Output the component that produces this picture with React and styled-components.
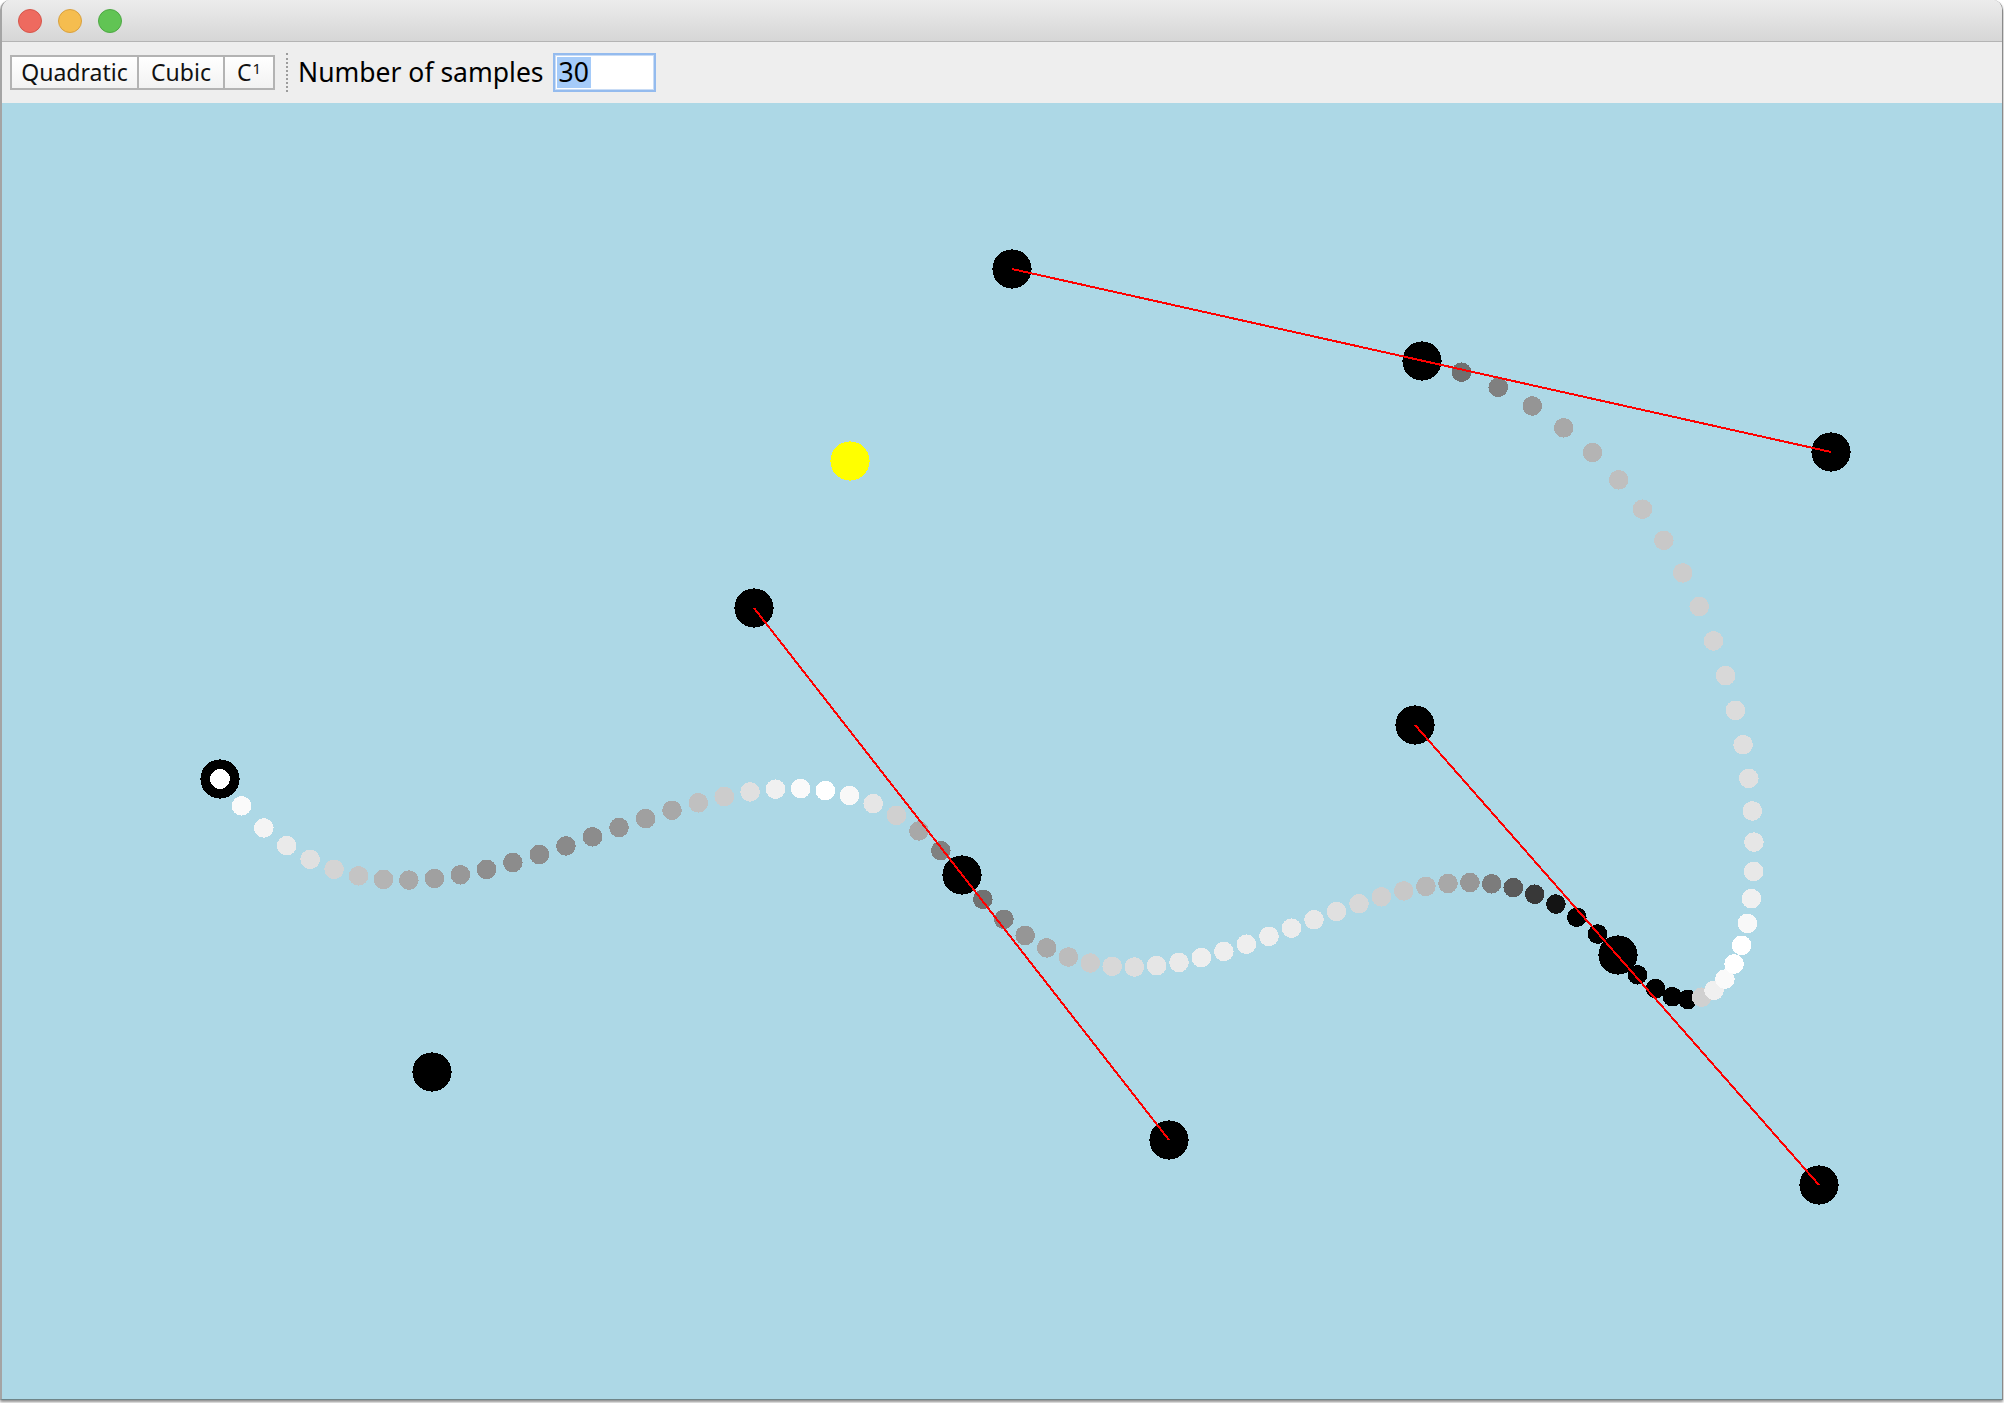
import React from 'react';
import styled, { createGlobalStyle } from 'styled-components';

const GlobalStyle = createGlobalStyle`
  html, body { margin: 0; padding: 0; background: #ffffff; }
  body { font-family: "Noto Sans", "DejaVu Sans", sans-serif; }
  * { box-sizing: border-box; }
`;

const Screen = styled.div`
  width: 2004px;
  height: 1403px;
  overflow: hidden;
  background: #ffffff;
`;

const Window = styled.div`
  width: 2003px;
  height: 1400px;
  display: flex;
  flex-direction: column;
  border-left: 2px solid #a4a4a4;
  border-right: 1px solid #8a8a8a;
  border-bottom: 1px solid #6f8589;
  border-radius: 10px 10px 0 0;
  overflow: hidden;
  box-shadow: 0 2px 3px rgba(0, 0, 0, 0.45);
`;

const TitleBar = styled.div`
  height: 42px;
  flex: none;
  display: flex;
  align-items: center;
  gap: 16px;
  padding-left: 16px;
  background: linear-gradient(#ececec, #d6d6d6);
  border-bottom: 1px solid #b4b4b4;
`;

const Light = styled.span`
  width: 24px;
  height: 24px;
  border-radius: 50%;
  background: ${(p) => p.$fill};
  border: 1px solid ${(p) => p.$edge};
`;

const Toolbar = styled.div`
  height: 61px;
  flex: none;
  display: flex;
  align-items: center;
  padding-left: 8px;
  background: #eeeeee;
`;

const ButtonGroup = styled.div`
  display: flex;
  height: 35px;
`;

const ToolButton = styled.button`
  width: ${(p) => p.$w}px;
  height: 35px;
  margin: 0;
  padding: 0;
  border: 2px solid #b3b3b3;
  border-left-width: ${(p) => (p.$first ? 2 : 0)}px;
  background: linear-gradient(#ffffff, #f2f2f2);
  font-family: "Noto Sans", "DejaVu Sans", sans-serif;
  font-size: 23px;
  color: #111111;
  display: flex;
  align-items: center;
  justify-content: center;
  line-height: 1;
`;

const Sup = styled.span`
  font-size: 15px;
  align-self: flex-start;
  margin-top: 4px;
  margin-left: 1px;
`;

const Separator = styled.div`
  width: 0;
  height: 39px;
  margin: 0 10px 0 11px;
  border-left: 2px dotted #9c9c9c;
`;

const Label = styled.span`
  font-size: 26.5px;
  color: #000000;
  line-height: 1;
  margin-right: 9px;
`;

const SampleField = styled.div`
  width: 103px;
  height: 39px;
  background: #ffffff;
  border: 2px solid #94bbee;
  box-shadow: inset 0 0 0 1px #c9dcf5;
  display: flex;
  align-items: center;
  padding-left: 2px;
`;

const Selection = styled.span`
  background: #a5cbf9;
  font-size: 26.5px;
  line-height: 31px;
  height: 31px;
  padding: 0 2px;
  color: #000000;
`;

const Canvas = styled.div`
  flex: 1;
  background: #add8e6;
  display: flex;
`;

const Drawing = styled.svg`
  width: 100%;
  height: 100%;
  display: block;
`;

const P = {
  S: [220, 779],
  D: [432, 1072],
  B1: [754, 608],
  B2: [962, 875],
  B3: [1169, 1140],
  C1: [1415, 725],
  C2: [1618, 955],
  C3: [1819, 1185],
  A1: [1012, 269],
  A2: [1422, 361],
  A3: [1831, 452],
  Y: [850, 461],
};

const segments = [
  {
    pts: [P.S, P.D, P.B1, P.B2],
    grays: ['fa', 'f4', 'ea', 'e0', 'd4', 'c4', 'b4', 'a8', 'a0', '98', '8e', '8c', '8c', '8a', '8c', '94', 'a0', 'a8', 'c0', 'cc', 'e0', 'f0', 'fa', 'ff', 'f8', 'e6', 'd0', 'a8', '80'],
  },
  {
    pts: [P.B2, P.B3, P.C1, P.C2],
    grays: ['71', '80', '96', 'a8', 'bc', 'cc', 'd8', 'de', 'e6', 'ea', 'ee', 'ee', 'ee', 'ee', 'ec', 'e8', 'e0', 'd8', 'd0', 'c8', 'b8', 'a8', '97', '7c', '5a', '38', '14', '00', '00'],
  },
  {
    pts: [P.C2, P.C3, P.A3, P.A2],
    grays: ['00', '00', '00', '00', 'd0', 'f0', 'fa', 'ff', 'ff', 'f8', 'f0', 'e8', 'e6', 'e3', 'e0', 'df', 'dc', 'd8', 'd4', 'd0', 'cc', 'c8', 'c4', 'bf', 'b4', 'a8', '95', '80', '70'],
  },
];

const bezier = ([p0, p1, p2, p3], t) => {
  const u = 1 - t;
  const a = u * u * u;
  const b = 3 * u * u * t;
  const c = 3 * u * t * t;
  const d = t * t * t;
  return [
    a * p0[0] + b * p1[0] + c * p2[0] + d * p3[0],
    a * p0[1] + b * p1[1] + c * p2[1] + d * p3[1],
  ];
};

const samples = segments.flatMap((seg, si) =>
  seg.grays.map((g, i) => {
    const [x, y] = bezier(seg.pts, (i + 1) / 30);
    return { key: `${si}-${i}`, x, y, fill: `#${g}${g}${g}` };
  })
);

const controls = [P.D, P.B1, P.B2, P.B3, P.C1, P.C2, P.C3, P.A1, P.A2, P.A3];
const tangents = [
  [P.B1, P.B3],
  [P.C1, P.C3],
  [P.A1, P.A3],
];

function CurveCanvas() {
  return (
    <Drawing viewBox="2 103 2000 1296" preserveAspectRatio="none">
      <g shapeRendering="crispEdges">
        {samples.map((s) => (
          <circle key={s.key} cx={s.x} cy={s.y} r={9.8} fill={s.fill} />
        ))}
        {controls.map((c, i) => (
          <circle key={i} cx={c[0]} cy={c[1]} r={19.6} fill="#000000" />
        ))}
        <circle cx={P.S[0]} cy={P.S[1]} r={19.6} fill="#000000" />
        <circle cx={P.S[0]} cy={P.S[1]} r={10} fill="#ffffff" />
        <circle cx={P.Y[0]} cy={P.Y[1]} r={19.6} fill="#ffff00" />
        {tangents.map(([a, b], i) => (
          <line key={i} x1={a[0]} y1={a[1]} x2={b[0]} y2={b[1]} stroke="#ff0000" strokeWidth={2} />
        ))}
      </g>
    </Drawing>
  );
}

export default function App() {
  return (
    <>
      <GlobalStyle />
      <Screen>
        <Window>
          <TitleBar>
            <Light $fill="#ee6a5f" $edge="#d5564b" />
            <Light $fill="#f5bd4f" $edge="#d8a03f" />
            <Light $fill="#61c454" $edge="#4ea844" />
          </TitleBar>
          <Toolbar>
            <ButtonGroup>
              <ToolButton $w={129} $first>Quadratic</ToolButton>
              <ToolButton $w={86}>Cubic</ToolButton>
              <ToolButton $w={50}>
                C<Sup>1</Sup>
              </ToolButton>
            </ButtonGroup>
            <Separator />
            <Label>Number of samples</Label>
            <SampleField>
              <Selection>30</Selection>
            </SampleField>
          </Toolbar>
          <Canvas>
            <CurveCanvas />
          </Canvas>
        </Window>
      </Screen>
    </>
  );
}
